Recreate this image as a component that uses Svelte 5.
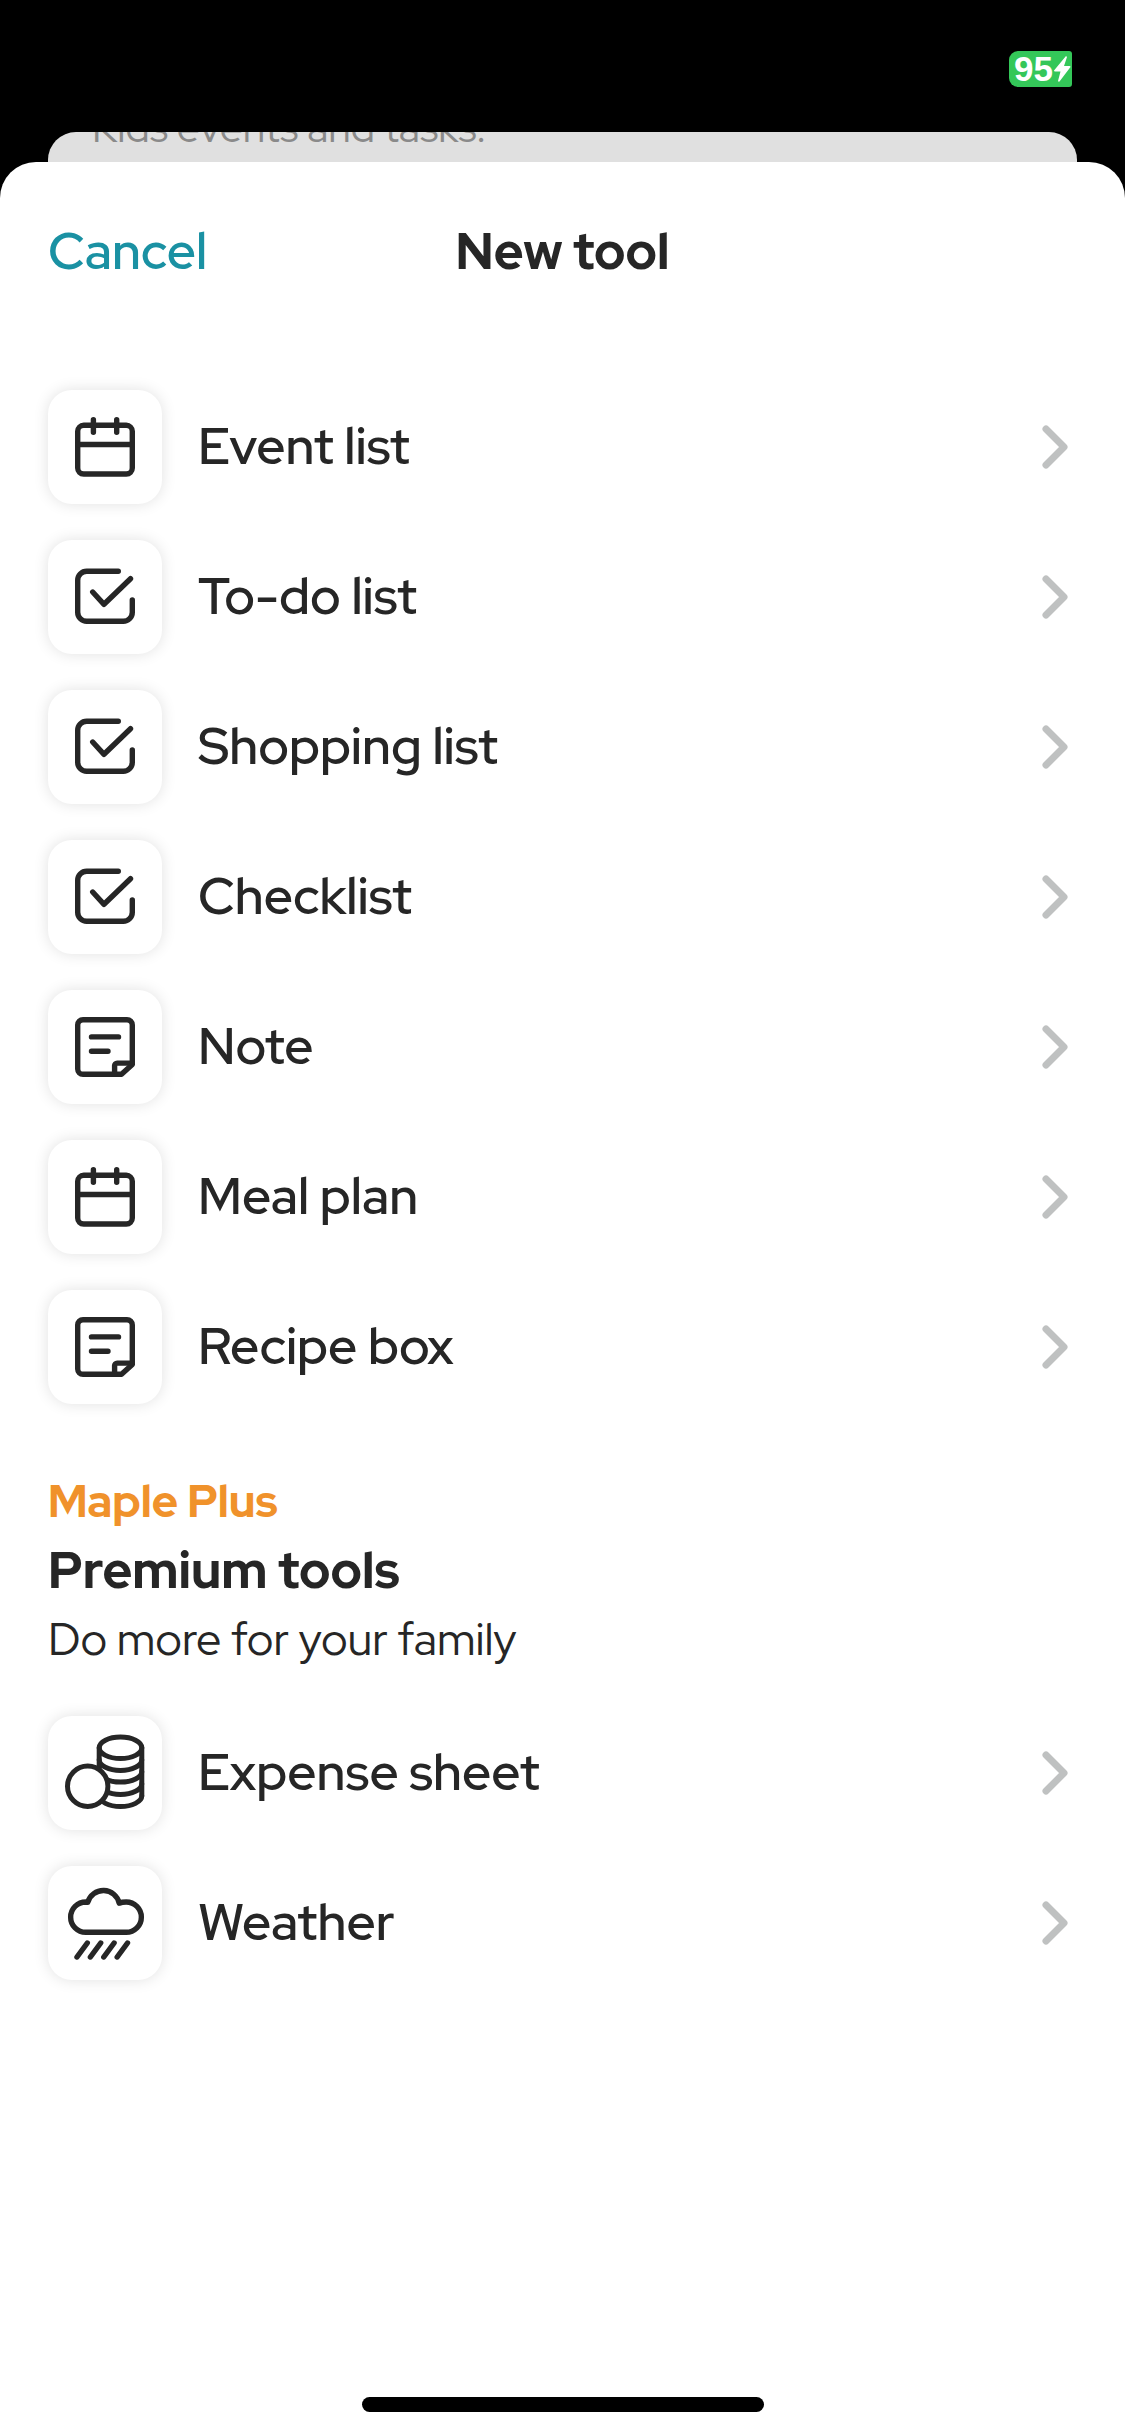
<script lang="ts">
	type Tool = { name: string; icon: string };

	const tools: Tool[] = [
		{ name: 'Event list', icon: 'calendar' },
		{ name: 'To-do list', icon: 'check' },
		{ name: 'Shopping list', icon: 'check' },
		{ name: 'Checklist', icon: 'check' },
		{ name: 'Note', icon: 'note' },
		{ name: 'Meal plan', icon: 'calendar' },
		{ name: 'Recipe box', icon: 'note' }
	];

	const premiumTools: Tool[] = [
		{ name: 'Expense sheet', icon: 'coins' },
		{ name: 'Weather', icon: 'weather' }
	];
</script>

{#snippet toolList(items: Tool[])}
	<ul>
		{#each items as tool}
			<li>
				<button class="tool">
					<span class="tile">
						<svg viewBox="0 0 114 114" aria-hidden="true">
							{#if tool.icon === 'calendar'}
								<rect x="29.7" y="35.3" width="54.6" height="48.7" rx="6" />
								<path d="M29.7 54.5H84.3M45.4 29.7V42.3M68.7 29.7V42.3" />
							{:else if tool.icon === 'check'}
								<path d="M70.3 31.2H38.7a9 9 0 0 0-9 9V72.3a9 9 0 0 0 9 9H75.3a9 9 0 0 0 9-9V60" />
								<path d="M44.7 52L56 64.3L82.5 38.7" />
							{:else if tool.icon === 'note'}
								<path d="M84.3 73V35a5.3 5.3 0 0 0-5.3-5.3H35a5.3 5.3 0 0 0-5.3 5.3V79a5.3 5.3 0 0 0 5.3 5.3H73.5L84.3 74.5V72" />
								<path d="M66.6 84V75.6a2.5 2.5 0 0 1 2.5-2.5H84M43.5 46.9H70.5M43.5 61.2H60" />
							{:else if tool.icon === 'coins'}
								<g class="thin">
									<ellipse cx="72.5" cy="31.8" rx="21.3" ry="10.7" />
									<path d="M51.2 31.8V80M93.8 31.8V79.8" />
									<path d="M51.2 43.7A21.3 10.7 0 0 0 93.8 43.7M51.2 55.4A21.3 10.7 0 0 0 93.8 55.4M51.2 67.7A21.3 10.7 0 0 0 93.8 67.7M51.2 79.8A21.3 10.7 0 0 0 93.8 79.8" />
									<circle class="coin" cx="39.7" cy="70.2" r="20.2" />
								</g>
							{:else}
								<path d="M37.8 66.3a15.1 15.1 0 0 1 0-30.3L39.8 36.2A16.2 16.2 0 0 1 71.2 37.2Q74 36 78.2 36a15.1 15.1 0 0 1 0 30.3Z" />
								<path d="M39.3 77L29 91M52.7 77L42.4 91M66.1 77L55.8 91M79.5 77L69.2 91" />
							{/if}
						</svg>
					</span>
					<span class="name">{tool.name}</span>
					<svg class="chevron" viewBox="0 0 28 46" aria-hidden="true">
						<path d="M5 5L23 23L5 41" />
					</svg>
				</button>
			</li>
		{/each}
	</ul>
{/snippet}

<div class="screen">
	<div class="statusBar">
		<div class="battery">
			<span>95</span>
			<svg viewBox="0 0 18 26" aria-hidden="true">
				<path d="M13 0L1 14.5Q1 15.5 2 15.5H7.5L5 25Q5.500 26 6.500 25.500L17.500 11Q17.500 10 16.500 10H11L14 1Z" />
			</svg>
		</div>
	</div>
	<div class="behind">
		<p>Kids events and tasks.</p>
	</div>
	<div class="sheet">
		<header>
			<button class="cancel">Cancel</button>
			<h1>New tool</h1>
		</header>
		<main>
			{@render toolList(tools)}
			<section>
				<p class="plan">Maple Plus</p>
				<h2>Premium tools</h2>
				<p class="tagline">Do more for your family</p>
				{@render toolList(premiumTools)}
			</section>
		</main>
		<div class="homeBar"></div>
	</div>
</div>

<style>
	:global(body) {
		background: #000;
	}

	.screen {
		display: flex;
		flex-direction: column;
		min-height: 100vh;
		color: #262626;
		font-family: 'Red Hat Display', Inter, sans-serif;
	}
	p,
	h1,
	h2,
	ul {
		margin: 0;
		padding: 0;
	}
	button {
		background: transparent;
		border: none;
		padding: 0;
		font: inherit;
		color: inherit;
		cursor: pointer;
	}

	.statusBar {
		box-sizing: border-box;
		height: 132px;
		padding: 51px 53px 0;
		display: flex;
		justify-content: flex-end;
		align-items: flex-start;
	}
	.battery {
		display: flex;
		align-items: center;
		justify-content: flex-end;
		width: 62px;
		height: 36px;
		padding-right: 1px;
		border-radius: 9px 3px 3px 9px;
		background: #34c759;
		color: white;
		font-family: 'Liberation Sans', sans-serif;
		font-size: 35px;
		font-weight: 700;
	}
	.battery svg {
		width: 18px;
		height: 26px;
		fill: white;
	}

	.behind {
		box-sizing: border-box;
		display: flex;
		align-items: flex-end;
		height: 30px;
		margin: 0 48px;
		padding: 0 44px 10px;
		overflow: hidden;
		border-radius: 28px 28px 0 0;
		background: #e0e0e0;
		color: #8a8a8a;
		font-size: 41px;
		line-height: 48px;
	}

	.sheet {
		flex: 1;
		display: flex;
		flex-direction: column;
		padding: 0 48px 24px;
		border-radius: 36px 36px 0 0;
		background: white;
	}
	header {
		display: grid;
		grid-template-columns: 1fr auto 1fr;
		align-items: center;
		padding: 59px 0 109px;
		line-height: 60px;
	}
	.cancel {
		justify-self: start;
		color: #1a91a3;
		font-size: 51px;
		font-weight: 600;
	}
	h1,
	h2 {
		font-size: 51px;
		font-weight: 800;
	}

	main {
		flex: 1;
	}
	ul {
		display: flex;
		flex-direction: column;
		gap: 36px;
		list-style: none;
	}
	.tool {
		display: flex;
		align-items: center;
		gap: 36px;
		width: 100%;
		padding-right: 8px;
		text-align: left;
	}
	.tile {
		width: 114px;
		height: 114px;
		border-radius: 24px;
		box-shadow: 0 0 15px rgba(0, 0, 0, 0.12);
	}
	.tile svg {
		display: block;
		fill: none;
		stroke: #262626;
		stroke-width: 5.4;
		stroke-linecap: round;
		stroke-linejoin: round;
	}
	.tile .thin {
		stroke-width: 5;
	}
	.tile .coin {
		fill: white;
	}
	.name {
		flex: 1;
		padding-bottom: 2px;
		font-size: 51px;
		font-weight: 600;
		line-height: 60px;
	}
	.chevron {
		width: 28px;
		height: 46px;
		fill: none;
		stroke: #bfc1c1;
		stroke-width: 7;
		stroke-linecap: round;
		stroke-linejoin: round;
	}

	section {
		padding-top: 64px;
	}
	.plan {
		color: #f0922b;
		font-size: 45px;
		font-weight: 800;
		line-height: 66px;
	}
	h2 {
		line-height: 72px;
	}
	.tagline {
		margin-bottom: 44px;
		font-size: 45px;
		font-weight: 400;
		line-height: 66px;
	}

	.homeBar {
		align-self: center;
		width: 402px;
		height: 15px;
		border-radius: 8px;
		background: #000;
	}
</style>
